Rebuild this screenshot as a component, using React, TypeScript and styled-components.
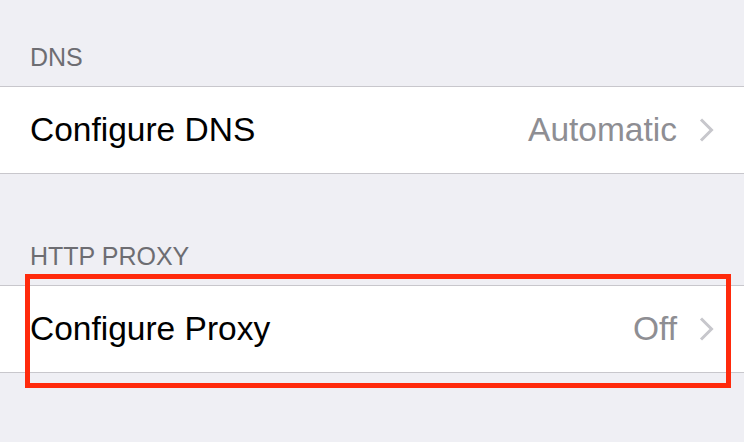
import React from 'react'
import styled, { createGlobalStyle } from 'styled-components'

const GlobalStyle = createGlobalStyle`
  html, body {
    margin: 0;
    padding: 0;
    background: #efeff4;
  }
  body {
    font-family: 'Liberation Sans', Arial, sans-serif;
    width: 744px;
    height: 442px;
    overflow: hidden;
  }
`;

const Screen = styled.div`
  width: 744px;
  height: 442px;
  background: #efeff4;
`;

const SectionHeader = styled.div<{ $top: number }>`
  padding: ${({ $top }) => $top}px 30px 14px;
  font-size: 25px;
  line-height: 30px;
  color: #6d6d72;
`;

const Section = styled.div`
  position: relative;
`;

const Group = styled.div`
  background: #ffffff;
  border-top: 1px solid #c8c7cc;
  border-bottom: 1px solid #c8c7cc;
`;

const Row = styled.div`
  height: 86px;
  display: flex;
  align-items: center;
  padding: 0 30px;
  font-size: 33.5px;
`;

const Label = styled.span`
  flex: 1;
  color: #000000;
`;

const Detail = styled.span`
  color: #8e8e93;
  margin-right: 22px;
`;

const Highlight = styled.div`
  position: absolute;
  left: 25px;
  right: 13px;
  top: -11px;
  bottom: -15px;
  border: 5px solid #ff2a0c;
  pointer-events: none;
`;

function Chevron() {
  return (
    <svg width="15" height="24" viewBox="0 0 15 24">
      <polyline
        points="2,1.5 12.5,12 2,22.5"
        fill="none"
        stroke="#c7c7cc"
        strokeWidth="3"
        strokeLinecap="butt"
        strokeLinejoin="miter"
      />
    </svg>
  );
}

interface SettingProps {
  label: string;
  value: string;
}

function SettingRow({ label, value }: SettingProps) {
  return (
    <Row>
      <Label>{label}</Label>
      <Detail>{value}</Detail>
      <Chevron />
    </Row>
  );
}

export default function App() {
  return (
    <Screen>
      <GlobalStyle />
      <SectionHeader $top={42}>DNS</SectionHeader>
      <Group>
        <SettingRow label="Configure DNS" value="Automatic" />
      </Group>
      <SectionHeader $top={67}>HTTP PROXY</SectionHeader>
      <Section>
        <Group>
          <SettingRow label="Configure Proxy" value="Off" />
        </Group>
        <Highlight />
      </Section>
    </Screen>
  );
}
